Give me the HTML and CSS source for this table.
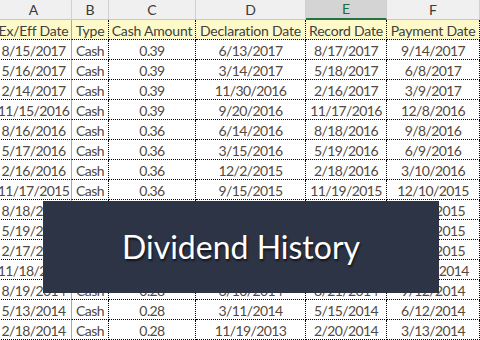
FILE: index.html
```html
<!DOCTYPE html>
<html>
<head>
<meta charset="utf-8">
<link rel="stylesheet" href="styles.css">
</head>
<body>
<div class="sheet">
  <div class="colheads">
    <div class="ch">A</div><div class="ch">B</div><div class="ch">C</div><div class="ch">D</div><div class="ch sel">E</div><div class="ch">F</div>
  </div>
  <div class="row head">
    <div class="c a">Ex/Eff Date</div><div class="c">Type</div><div class="c">Cash Amount</div><div class="c">Declaration Date</div><div class="c">Record Date</div><div class="c">Payment Date</div>
  </div>
  <div class="row"><div class="c a">8/15/2017</div><div class="c">Cash</div><div class="c">0.39</div><div class="c">6/13/2017</div><div class="c">8/17/2017</div><div class="c">9/14/2017</div></div>
  <div class="row"><div class="c a">5/16/2017</div><div class="c">Cash</div><div class="c">0.39</div><div class="c">3/14/2017</div><div class="c">5/18/2017</div><div class="c">6/8/2017</div></div>
  <div class="row"><div class="c a">2/14/2017</div><div class="c">Cash</div><div class="c">0.39</div><div class="c">11/30/2016</div><div class="c">2/16/2017</div><div class="c">3/9/2017</div></div>
  <div class="row"><div class="c a">11/15/2016</div><div class="c">Cash</div><div class="c">0.39</div><div class="c">9/20/2016</div><div class="c">11/17/2016</div><div class="c">12/8/2016</div></div>
  <div class="row"><div class="c a">8/16/2016</div><div class="c">Cash</div><div class="c">0.36</div><div class="c">6/14/2016</div><div class="c">8/18/2016</div><div class="c">9/8/2016</div></div>
  <div class="row"><div class="c a">5/17/2016</div><div class="c">Cash</div><div class="c">0.36</div><div class="c">3/15/2016</div><div class="c">5/19/2016</div><div class="c">6/9/2016</div></div>
  <div class="row"><div class="c a">2/16/2016</div><div class="c">Cash</div><div class="c">0.36</div><div class="c">12/2/2015</div><div class="c">2/18/2016</div><div class="c">3/10/2016</div></div>
  <div class="row"><div class="c a">11/17/2015</div><div class="c">Cash</div><div class="c">0.36</div><div class="c">9/15/2015</div><div class="c">11/19/2015</div><div class="c">12/10/2015</div></div>
  <div class="row"><div class="c a">8/18/2015</div><div class="c">Cash</div><div class="c">0.33</div><div class="c">6/16/2015</div><div class="c">8/20/2015</div><div class="c">9/10/2015</div></div>
  <div class="row"><div class="c a">5/19/2015</div><div class="c">Cash</div><div class="c">0.33</div><div class="c">3/17/2015</div><div class="c">5/21/2015</div><div class="c">6/11/2015</div></div>
  <div class="row"><div class="c a">2/17/2015</div><div class="c">Cash</div><div class="c">0.33</div><div class="c">12/3/2014</div><div class="c">2/19/2015</div><div class="c">3/12/2015</div></div>
  <div class="row"><div class="c a">11/18/2014</div><div class="c">Cash</div><div class="c">0.33</div><div class="c">9/16/2014</div><div class="c">11/20/2014</div><div class="c">12/11/2014</div></div>
  <div class="row"><div class="c a">8/19/2014</div><div class="c">Cash</div><div class="c">0.28</div><div class="c">6/10/2014</div><div class="c">8/21/2014</div><div class="c">9/12/2014</div></div>
  <div class="row"><div class="c a">5/13/2014</div><div class="c">Cash</div><div class="c">0.28</div><div class="c">3/11/2014</div><div class="c">5/15/2014</div><div class="c">6/12/2014</div></div>
  <div class="row"><div class="c a">2/18/2014</div><div class="c">Cash</div><div class="c">0.28</div><div class="c">11/19/2013</div><div class="c">2/20/2014</div><div class="c">3/13/2014</div></div>
</div>
<div class="banner">Dividend History</div>
</body>
</html>
```
FILE: styles.css
```css
html, body {
  margin: 0;
  padding: 0;
  width: 480px;
  height: 340px;
  overflow: hidden;
  background: #ffffff;
}
body {
  position: relative;
  font-family: Lato, "Open Sans", sans-serif;
}
.sheet {
  margin-left: -4px;
  width: 484px;
}
.colheads, .row {
  display: grid;
  grid-template-columns: 76px 37px 87px 110px 81px 93px;
}
.colheads {
  height: 20px;
  background: #f0f0f0;
}
.ch {
  box-sizing: border-box;
  height: 20px;
  border-right: 1px solid #d0d0d0;
  border-bottom: 1px solid #c8c8c8;
  display: flex;
  align-items: center;
  justify-content: center;
  font-size: 14px;
  color: #3a3a3a;
  padding-bottom: 1px;
}
.ch.sel {
  background: #d4d4d4;
  color: #1e6b40;
  border-bottom: 2px solid #217346;
}
.row {
  height: 20px;
}
.c {
  box-sizing: border-box;
  height: 20px;
  border-right: 1px dotted #000;
  border-bottom: 1px dotted #000;
  display: flex;
  align-items: center;
  justify-content: center;
  font-size: 14px;
  color: #54493f;
  white-space: nowrap;
  overflow: hidden;
  padding-top: 1px;
}
.row:not(.head) .c {
  letter-spacing: -0.6px;
}
.c.a {
  border-right: 1px solid #a8a8a8;
}
.head .c {
  background: #fef9c8;
  color: #3f3f3f;
  font-size: 14px;
  letter-spacing: -0.2px;
}
.banner {
  position: absolute;
  left: 43px;
  top: 201px;
  width: 396px;
  height: 92px;
  background: #2c3446;
  color: #ffffff;
  display: flex;
  align-items: center;
  justify-content: center;
  font-size: 32px;
  text-shadow: 1px 2px 2px rgba(0,0,0,0.6);
  padding-bottom: 2px;
  box-sizing: border-box;
}
```
